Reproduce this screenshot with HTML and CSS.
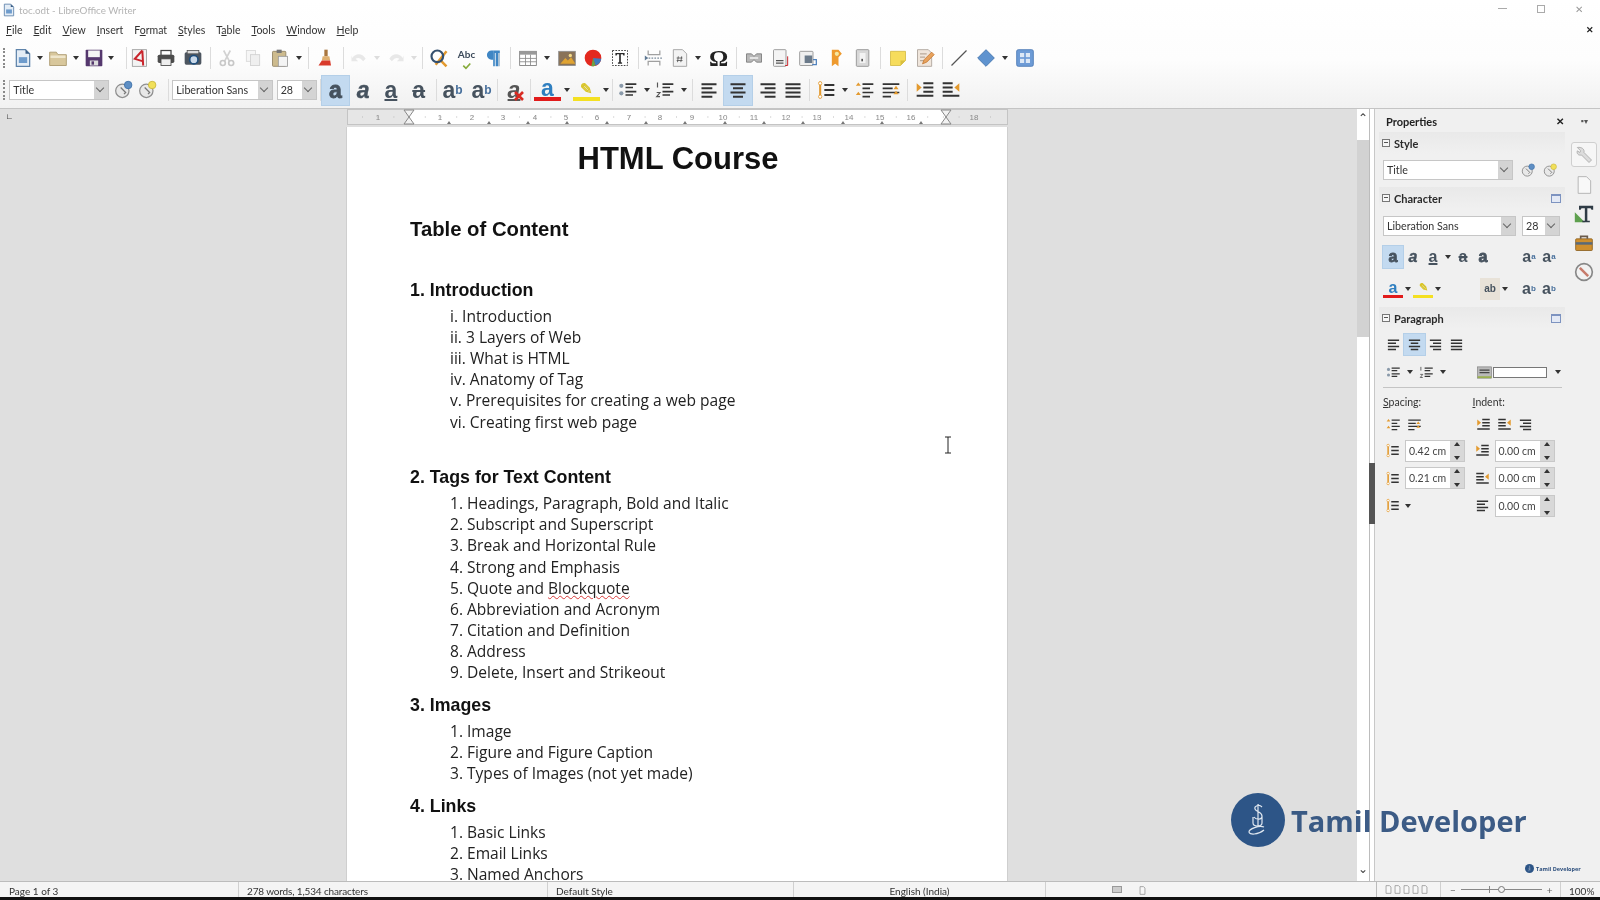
FILE: index.html
```html
<!DOCTYPE html>
<html lang="en">
  <head>
    <meta charset="UTF-8" />
    <meta name="viewport" content="width=device-width, initial-scale=1.0" />
    <title>toc.odt - LibreOffice Writer</title>
    <link rel="stylesheet" href="styles.css">
  </head>

  <body>
    <svg class="defs" width="0" height="0">
      <symbol id="i-doc" viewBox="0 0 24 24"><path d="M4 2h11l5 5v15H4z" fill="#e4edf6" stroke="#5f84ab" stroke-width="1.5"/><rect x="7" y="11" width="10" height="7" fill="#6f9ccc"/><path d="M15 2l5 5h-5z" fill="#3c5f86"/></symbol>
      <symbol id="i-open" viewBox="0 0 24 24"><path d="M2 5h8l2 3h10v13H2z" fill="#d8c79c" stroke="#a69468"/><rect x="3" y="9" width="18" height="3" fill="#efe6cc"/></symbol>
      <symbol id="i-save" viewBox="0 0 24 24"><rect x="2" y="2" width="20" height="20" rx="1" fill="#55386e"/><rect x="5" y="3" width="14" height="8" fill="#f4f4f4"/><rect x="7" y="15" width="10" height="6" fill="#ddd"/><rect x="9" y="16" width="3" height="4" fill="#55386e"/></symbol>
      <symbol id="i-pdf" viewBox="0 0 24 24"><rect x="4" y="2" width="17" height="20" fill="#f3f3f3" stroke="#9a9a9a"/><path d="M16 3L7 13l10 3M16 3l1 18" fill="none" stroke="#c9252c" stroke-width="2.4"/></symbol>
      <symbol id="i-print" viewBox="0 0 24 24"><rect x="6" y="3" width="12" height="6" fill="#fff" stroke="#444" stroke-width="1.5"/><rect x="2" y="8" width="20" height="10" rx="2" fill="#4d4d4d"/><rect x="6" y="13" width="12" height="8" fill="#eee" stroke="#444"/></symbol>
      <symbol id="i-preview" viewBox="0 0 24 24"><rect x="2" y="5" width="20" height="15" rx="2" fill="#4d5660"/><rect x="5" y="3" width="14" height="4" fill="#ddd" stroke="#555"/><circle cx="13" cy="14" r="5" fill="#c9d8e8" stroke="#1f4e7c" stroke-width="2"/></symbol>
      <symbol id="i-cut" viewBox="0 0 24 24"><path d="M8 3l7 13M16 3L9 16" stroke="#d2d2d2" stroke-width="2" fill="none"/><circle cx="7" cy="18" r="3" fill="none" stroke="#c8c8c8" stroke-width="2"/><circle cx="17" cy="18" r="3" fill="none" stroke="#c8c8c8" stroke-width="2"/></symbol>
      <symbol id="i-copy" viewBox="0 0 24 24"><rect x="4" y="3" width="11" height="13" fill="#f6f6f6" stroke="#d8d8d8"/><rect x="9" y="8" width="11" height="13" fill="#efefef" stroke="#d0d0d0"/></symbol>
      <symbol id="i-paste" viewBox="0 0 24 24"><rect x="3" y="4" width="16" height="18" rx="1" fill="#cdbb8e" stroke="#8f8162"/><rect x="8" y="2" width="6" height="4" fill="#777"/><rect x="10" y="10" width="11" height="12" fill="#f4f4f4" stroke="#999"/></symbol>
      <symbol id="i-brush" viewBox="0 0 24 24"><rect x="10" y="2" width="4" height="8" fill="#a9763f"/><path d="M8 10h8l1 5H7z" fill="#e0b070"/><path d="M7 15h10l1 6H3z" fill="#d93a2b"/></symbol>
      <symbol id="i-undo" viewBox="0 0 24 24"><path d="M4 12c4-6 12-6 16 1l-3 3c-3-4-6-5-9-3l3 3H3V9z" fill="#e8e8e8"/></symbol>
      <symbol id="i-redo" viewBox="0 0 24 24"><path d="M20 12c-4-6-12-6-16 1l3 3c3-4 6-5 9-3l-3 3h8V9z" fill="#e8e8e8"/></symbol>
      <symbol id="i-find" viewBox="0 0 24 24"><path d="M13 14l8 8M21 4L8 20" stroke="#e39a2f" stroke-width="3"/><circle cx="10" cy="10" r="7" fill="none" stroke="#34506f" stroke-width="2.6"/></symbol>
      <symbol id="i-check" viewBox="0 0 24 24"><path d="M6 16l5 5 8-9" fill="none" stroke="#86ab3a" stroke-width="3"/></symbol>
      <symbol id="i-pilcrow" viewBox="0 0 24 24"><path d="M11 3H9a5.500 5.500 0 0 0 0 11h2z" fill="#3f86c4"/><path d="M11 3h8v3h-2v16h-3V6h-1v16h-2z" fill="#3f86c4"/><path d="M17 6h2v16h-2z" fill="#9db8cf"/></symbol>
      <symbol id="i-table" viewBox="0 0 24 24"><rect x="2" y="4" width="20" height="17" fill="#fff" stroke="#777"/><rect x="2" y="4" width="20" height="4" fill="#999"/><path d="M2 12.500h20M2 16.500h20M9 8v13M15 8v13" stroke="#888"/></symbol>
      <symbol id="i-image" viewBox="0 0 24 24"><rect x="2" y="4" width="20" height="17" fill="#8a7358" stroke="#8f8f8f"/><path d="M4 19l6-7 3 3 4-4 5 8z" fill="#e0a432"/><circle cx="16" cy="9" r="2" fill="#f4dc8a"/></symbol>
      <symbol id="i-chart" viewBox="0 0 24 24"><circle cx="12" cy="12" r="10" fill="#e3291f"/><path d="M12 12l10 1a10 10 0 0 1-7 8z" fill="#3f7cc0"/><path d="M12 12l3 9a10 10 0 0 1-5 1z" fill="#6aa344"/></symbol>
      <symbol id="i-textbox" viewBox="0 0 24 24"><rect x="3" y="3" width="18" height="18" fill="#fff" stroke="#222" stroke-dasharray="2 1.500"/><path d="M6.500 6h11v3h-1.500l-.5-1.500h-2.500V17l1.500.5V19h-5v-1.500L11 17V7.500H8.500L8 9H6.500z" fill="#2b2b2b"/></symbol>
      <symbol id="i-break" viewBox="0 0 24 24"><path d="M5 3v5h14V3M5 21v-5h14v5" fill="none" stroke="#a0a0a0" stroke-width="1.500"/><path d="M2 12h20" stroke="#7a8a9a" stroke-dasharray="2 1.500" stroke-width="1.500"/><path d="M1 9l4 3-4 3z" fill="#607a94"/></symbol>
      <symbol id="i-field" viewBox="0 0 24 24"><path d="M4 2h11l5 5v15H4z" fill="#f3f3f3" stroke="#999"/><path d="M10 10l-1 7M14 10l-1 7M8 12h7M8 15h7" stroke="#555"/></symbol>
      <symbol id="i-link" viewBox="0 0 24 24"><path d="M3 7h6l3 3 3-3h6v10h-6l-3-3-3 3H3z" fill="#b8b8b8" stroke="#777"/><rect x="7" y="11" width="10" height="2" fill="#eee"/></symbol>
      <symbol id="i-foot" viewBox="0 0 24 24"><rect x="3" y="2" width="15" height="20" rx="1" fill="#f4f4f4" stroke="#8d8d8d"/><path d="M6 15h9M6 18h9" stroke="#555" stroke-width="1.500"/><path d="M20 10v11h-3" fill="none" stroke="#c9252c" stroke-width="1.200"/></symbol>
      <symbol id="i-end" viewBox="0 0 24 24"><rect x="2" y="4" width="16" height="17" rx="1" fill="#efefef" stroke="#8d8d8d"/><rect x="8" y="9" width="9" height="9" fill="#6b7a8a"/><path d="M18 14h4v6h-5" fill="none" stroke="#4f81bd" stroke-width="1.500"/></symbol>
      <symbol id="i-mark" viewBox="0 0 24 24"><path d="M7 2h8l4 5-4 4v11l-4-3-4 3z" fill="#ee9a2e"/><circle cx="13" cy="7" r="2.500" fill="#f5e7a0"/></symbol>
      <symbol id="i-xref" viewBox="0 0 24 24"><rect x="4" y="2" width="15" height="20" rx="1" fill="#d8d8d8" stroke="#8d8d8d"/><rect x="8" y="6" width="7" height="12" fill="#f3f3f3"/><rect x="10" y="13" width="2" height="3" fill="#555"/></symbol>
      <symbol id="i-note" viewBox="0 0 24 24"><path d="M3 4h18v11l-6 6H3z" fill="#f6dc5c" stroke="#d4bb45"/><path d="M15 21v-6h6z" fill="#d9bf3f"/></symbol>
      <symbol id="i-track" viewBox="0 0 24 24"><path d="M3 2h13l4 4v16H3z" fill="#f0e6dc" stroke="#a89f96"/><path d="M6 7h8M6 11h6M6 15h5" stroke="#b9a999" stroke-width="1.500"/><path d="M9 19l2-5 9-9 3 3-9 9z" fill="#e8a25c" stroke="#c57a35"/></symbol>
      <symbol id="i-line" viewBox="0 0 24 24"><path d="M3 21L21 3" stroke="#555" stroke-width="1.500"/></symbol>
      <symbol id="i-shape" viewBox="0 0 24 24"><path d="M12 2l10 10-10 10L2 12z" fill="#5f93cf" stroke="#3c6fa8"/></symbol>
      <symbol id="i-points" viewBox="0 0 24 24"><rect x="2" y="2" width="20" height="20" rx="2" fill="#6d9bd6" stroke="#4a78b4"/><rect x="6" y="6" width="5" height="5" fill="#dce8f6"/><rect x="13" y="6" width="5" height="5" fill="#dce8f6"/><rect x="6" y="13" width="5" height="5" fill="#dce8f6"/><rect x="13" y="13" width="5" height="5" fill="#dce8f6"/></symbol>
      <symbol id="a-left" viewBox="0 0 24 24"><path d="M3 5h18M3 10h13M3 15h18M3 20h13" stroke="#333" stroke-width="2.400"/></symbol>
      <symbol id="a-center" viewBox="0 0 24 24"><path d="M3 5h18M6 10h12M3 15h18M6 20h12" stroke="#333" stroke-width="2.400"/></symbol>
      <symbol id="a-right" viewBox="0 0 24 24"><path d="M3 5h18M8 10h13M3 15h18M8 20h13" stroke="#333" stroke-width="2.400"/></symbol>
      <symbol id="a-just" viewBox="0 0 24 24"><path d="M3 5h18M3 10h18M3 15h18M3 20h18" stroke="#333" stroke-width="2.400"/></symbol>
      <symbol id="l-bullet" viewBox="0 0 24 24"><circle cx="4" cy="7" r="2.500" fill="#8a9aaa"/><circle cx="4" cy="16" r="2.500" fill="#8a9aaa"/><path d="M9 5h13M9 9h9M9 14h13M9 18h9" stroke="#333" stroke-width="2"/></symbol>
      <symbol id="l-number" viewBox="0 0 24 24"><path d="M3 3v6M2 15h4l-4 5h4" stroke="#555" stroke-width="1.400" fill="none"/><path d="M9 5h13M9 9h9M9 14h13M9 18h9" stroke="#333" stroke-width="2"/></symbol>
      <symbol id="s-line" viewBox="0 0 24 24"><path d="M5 2v20" stroke="#e39a2f" stroke-width="2.500"/><circle cx="5" cy="4" r="2" fill="#fff" stroke="#e39a2f"/><circle cx="5" cy="20" r="2" fill="#fff" stroke="#e39a2f"/><path d="M10 6h12M10 12h12M10 18h12" stroke="#333" stroke-width="2.400"/></symbol>
      <symbol id="s-up" viewBox="0 0 24 24"><path d="M9 5h13M9 10h9M9 15h13M9 20h9" stroke="#333" stroke-width="2"/><path d="M4 3l3 4H1zM4 14l3 4H1z" fill="#e39a2f"/></symbol>
      <symbol id="s-down" viewBox="0 0 24 24"><path d="M2 5h20M2 10h12M2 15h20M2 20h10" stroke="#333" stroke-width="2"/><path d="M18 7l3 4h-6zM18 13l3 4h-6z" fill="#e39a2f"/></symbol>
      <symbol id="n-more" viewBox="0 0 24 24"><path d="M10 4h12M10 9h12M10 14h12M2 19h20" stroke="#333" stroke-width="2.400"/><path d="M2 4l6 5-6 5z" fill="#e39a2f"/></symbol>
      <symbol id="n-less" viewBox="0 0 24 24"><path d="M2 4h12M2 9h12M2 14h12M2 19h20" stroke="#333" stroke-width="2.400"/><path d="M22 4l-6 5 6 5z" fill="#e39a2f"/></symbol>
      <symbol id="i-wrench" viewBox="0 0 24 24"><path d="M4 3l4 4-1 2-3-2c-1 3 1 6 5 5l9 9 3-3-9-9c1-4-3-7-8-6z" fill="#dcdcdc" stroke="#a8a8a8"/></symbol>
      <symbol id="i-page" viewBox="0 0 24 24"><path d="M5 2h10l5 5v15H5z" fill="#f8f8f8" stroke="#aaa"/></symbol>
      <symbol id="i-styles" viewBox="0 0 24 24"><path d="M1 22V10l12 12z" fill="#5ea04e"/><path d="M6 2h17v5h-2l-1-2h-4v15h3v2h-9v-2h3V5H9L8 7H6z" fill="#2f3b45"/></symbol>
      <symbol id="i-case" viewBox="0 0 24 24"><rect x="2" y="7" width="20" height="14" rx="1" fill="#cf8f2e" stroke="#8a5f1f"/><path d="M8 7V4h8v3" fill="none" stroke="#6a5a4a" stroke-width="2"/><rect x="2" y="11" width="20" height="3" fill="#5a6a7a"/></symbol>
      <symbol id="i-compass" viewBox="0 0 24 24"><circle cx="12" cy="12" r="10" fill="#f2f2f2" stroke="#888" stroke-width="2"/><path d="M7 7l10 10" stroke="#c77b6b" stroke-width="3"/></symbol>
      <symbol id="i-plain" viewBox="0 0 24 24"><circle cx="10" cy="13" r="8" fill="#e8e8e8" stroke="#8f8f8f" stroke-width="1.500"/><path d="M8 9l6 6-2 2" fill="none" stroke="#777" stroke-width="1.500"/><circle cx="17" cy="6" r="4.500" fill="#5f8fc4" stroke="#3c6fa8"/></symbol>
      <symbol id="i-newstyle" viewBox="0 0 24 24"><circle cx="10" cy="13" r="8" fill="#e8e8e8" stroke="#8f8f8f" stroke-width="1.500"/><path d="M8 9l6 6-2 2" fill="none" stroke="#777" stroke-width="1.500"/><circle cx="17" cy="6" r="4.500" fill="#f1e05a" stroke="#c8b53a"/></symbol>
      <symbol id="i-area" viewBox="0 0 24 24"><rect x="1" y="3" width="22" height="18" fill="#b9b9b9" stroke="#777"/><path d="M4 8h16M4 12h16" stroke="#444" stroke-width="2"/><rect x="1" y="18" width="22" height="3" fill="#9ab04f"/></symbol>
      <symbol id="i-x" viewBox="0 0 10 10"><path d="M1 1l8 8M9 1L1 9" stroke="#d92b22" stroke-width="2.600"/></symbol>
      <symbol id="i-sheet" viewBox="0 0 10 12"><path d="M1.500.5h5l2 2v9h-7z" fill="#f8f8f8" stroke="#888"/></symbol>
      <symbol id="i-cursor" viewBox="0 0 10 18"><path d="M2 1h6M5 1v16M2 17h6" stroke="#222" fill="none"/></symbol>
      <symbol id="i-logo" viewBox="0 0 54 54"><circle cx="27" cy="27" r="27" fill="#2d5587"/><path d="M31 14c-3-3-8-1-7 2s7 3 7 7-6 4-8 1M27 11v23M22 24v6c0 4 9 4 9 0v-7M33 34c-5-2-15 2-15 5s9 3 15-2" fill="none" stroke="#dfe7f0" stroke-width="1.200"/></symbol>
    </svg>

    <div class="app">
      <div class="titlebar">
        <svg class="title-icon"><use href="#i-doc"/></svg>
        <span class="title-text">toc.odt - LibreOffice Writer</span>
        <div class="window-btns">
          <span class="win-min"></span>
          <span class="win-max"></span>
          <span class="win-close">✕</span>
        </div>
      </div>

      <div class="menubar">
        <nav class="menus">
          <span><u>F</u>ile</span>
          <span><u>E</u>dit</span>
          <span><u>V</u>iew</span>
          <span><u>I</u>nsert</span>
          <span>F<u>o</u>rmat</span>
          <span><u>S</u>tyles</span>
          <span>T<u>a</u>ble</span>
          <span><u>T</u>ools</span>
          <span><u>W</u>indow</span>
          <span><u>H</u>elp</span>
        </nav>
        <span class="doc-close">✕</span>
      </div>

      <div class="toolbar">
        <i class="grip"></i>
        <div class="group w118">
          <svg class="ico"><use href="#i-doc"/></svg><b class="drop"></b>
          <svg class="ico"><use href="#i-open"/></svg><b class="drop"></b>
          <svg class="ico"><use href="#i-save"/></svg><b class="drop"></b>
        </div>
        <i class="sep"></i>
        <div class="group w83 print-group">
          <svg class="ico"><use href="#i-pdf"/></svg>
          <svg class="ico"><use href="#i-print"/></svg>
          <svg class="ico"><use href="#i-preview"/></svg>
        </div>
        <i class="sep"></i>
        <div class="group w97">
          <svg class="ico"><use href="#i-cut"/></svg>
          <svg class="ico"><use href="#i-copy"/></svg>
          <svg class="ico"><use href="#i-paste"/></svg><b class="drop"></b>
        </div>
        <i class="sep"></i>
        <div class="group w34">
          <svg class="ico"><use href="#i-brush"/></svg>
        </div>
        <i class="sep"></i>
        <div class="group w78">
          <svg class="ico"><use href="#i-undo"/></svg><b class="drop faint"></b>
          <svg class="ico"><use href="#i-redo"/></svg><b class="drop faint"></b>
        </div>
        <i class="sep"></i>
        <div class="group w87">
          <svg class="ico"><use href="#i-find"/></svg>
          <span class="spell">Abc<svg class="spell-check"><use href="#i-check"/></svg></span>
          <svg class="ico"><use href="#i-pilcrow"/></svg>
        </div>
        <i class="sep"></i>
        <div class="group w127 insert-group">
          <svg class="ico"><use href="#i-table"/></svg><b class="drop"></b>
          <svg class="ico"><use href="#i-image"/></svg>
          <svg class="ico"><use href="#i-chart"/></svg>
          <svg class="ico"><use href="#i-textbox"/></svg>
        </div>
        <i class="sep"></i>
        <div class="group w97">
          <svg class="ico"><use href="#i-break"/></svg>
          <svg class="ico"><use href="#i-field"/></svg><b class="drop"></b>
          <span class="omega">Ω</span>
        </div>
        <i class="sep"></i>
        <div class="group w143">
          <svg class="ico"><use href="#i-link"/></svg>
          <svg class="ico"><use href="#i-foot"/></svg>
          <svg class="ico"><use href="#i-end"/></svg>
          <svg class="ico"><use href="#i-mark"/></svg>
          <svg class="ico"><use href="#i-xref"/></svg>
        </div>
        <i class="sep"></i>
        <div class="group w61">
          <svg class="ico"><use href="#i-note"/></svg>
          <svg class="ico"><use href="#i-track"/></svg>
        </div>
        <i class="sep"></i>
        <div class="group w98">
          <svg class="ico"><use href="#i-line"/></svg>
          <svg class="ico"><use href="#i-shape"/></svg><b class="drop"></b>
          <svg class="ico"><use href="#i-points"/></svg>
        </div>
      </div>

      <div class="toolbar">
        <i class="grip"></i>
        <div class="group style-group">
          <div class="combo style-combo"><span>Title</span><b class="combo-btn"></b></div>
          <svg class="ico"><use href="#i-plain"/></svg>
          <svg class="ico"><use href="#i-newstyle"/></svg>
        </div>
        <i class="sep"></i>
        <div class="group w151">
          <div class="combo font-combo"><span>Liberation Sans</span><b class="combo-btn"></b></div>
          <div class="combo size-combo"><span>28</span><b class="combo-btn"></b></div>
        </div>
        <i class="sep"></i>
        <div class="group w115 format-group">
          <span class="glyph on g-bold">a</span>
          <span class="glyph g-italic">a</span>
          <span class="glyph g-under">a</span>
          <span class="glyph g-strike">a</span>
        </div>
        <i class="sep"></i>
        <div class="group w60">
          <span class="glyph">a<sup>b</sup></span>
          <span class="glyph">a<sub>b</sub></span>
        </div>
        <i class="sep"></i>
        <div class="group w32">
          <span class="glyph g-clear">a<svg class="clear-x"><use href="#i-x"/></svg></span>
        </div>
        <i class="sep"></i>
        <div class="group w81">
          <span class="glyph g-color">a</span><b class="drop"></b>
          <span class="glyph g-mark">✎</span><b class="drop"></b>
        </div>
        <i class="sep"></i>
        <div class="group w79">
          <svg class="ico"><use href="#l-bullet"/></svg><b class="drop"></b>
          <svg class="ico"><use href="#l-number"/></svg><b class="drop"></b>
        </div>
        <i class="sep"></i>
        <div class="group w116">
          <svg class="ico"><use href="#a-left"/></svg>
          <span class="on-box"><svg class="ico"><use href="#a-center"/></svg></span>
          <svg class="ico"><use href="#a-right"/></svg>
          <svg class="ico"><use href="#a-just"/></svg>
        </div>
        <i class="sep"></i>
        <div class="group w97">
          <svg class="ico"><use href="#s-line"/></svg><b class="drop"></b>
          <svg class="ico"><use href="#s-up"/></svg>
          <svg class="ico"><use href="#s-down"/></svg>
        </div>
        <i class="sep"></i>
        <div class="group w60">
          <svg class="ico"><use href="#n-more"/></svg>
          <svg class="ico"><use href="#n-less"/></svg>
        </div>
      </div>

      <div class="main">
        <div class="workspace">
          <span class="tab-mark">∟</span>
          <svg class="ruler" width="661" height="16" viewBox="0 0 661 16">
            <rect width="661" height="16" fill="#e6e6e6"/>
            <rect x="62" y="1" width="537" height="14" fill="#fff"/>
            <rect x=".5" y=".5" width="660" height="15" fill="none" stroke="#c4c4c4"/>
            <path d="M15 8H650" stroke="#bbb" stroke-dasharray="1 14.700"/>
            <g class="ruler-nums" text-anchor="middle">
              <text x="31" y="11">1</text><text x="93" y="11">1</text><text x="125" y="11">2</text><text x="156" y="11">3</text><text x="188" y="11">4</text><text x="219" y="11">5</text><text x="250" y="11">6</text><text x="282" y="11">7</text><text x="313" y="11">8</text><text x="345" y="11">9</text><text x="376" y="11">10</text><text x="407" y="11">11</text><text x="439" y="11">12</text><text x="470" y="11">13</text><text x="502" y="11">14</text><text x="533" y="11">15</text><text x="564" y="11">16</text><text x="627" y="11">18</text>
            </g>
            <path d="M100 15l2-3 2 3zM140 15l2-3 2 3zM179 15l2-3 2 3zM218 15l2-3 2 3zM258 15l2-3 2 3zM297 15l2-3 2 3zM336 15l2-3 2 3zM376 15l2-3 2 3zM415 15l2-3 2 3zM454 15l2-3 2 3zM494 15l2-3 2 3zM533 15l2-3 2 3zM572 15l2-3 2 3z" fill="#777"/>
            <path d="M57 1h10l-5 7 5 7H57l5-7zM594 1h10l-5 7 5 7h-10l5-7z" fill="#f2f2f2" stroke="#888"/>
          </svg>
          <div class="page">
            <h1 class="doc-title">HTML Course</h1>
            <h2 class="doc-sub">Table of Content</h2>

            <h3 class="doc-head first">1. Introduction</h3>
            <ul class="doc-list">
              <li>i. Introduction</li>
              <li>ii. 3 Layers of Web</li>
              <li>iii. What is HTML</li>
              <li>iv. Anatomy of Tag</li>
              <li>v. Prerequisites for creating a web page</li>
              <li>vi. Creating first web page</li>
            </ul>

            <h3 class="doc-head far">2. Tags for Text Content</h3>
            <ul class="doc-list">
              <li>1. Headings, Paragraph, Bold and Italic</li>
              <li>2. Subscript and Superscript</li>
              <li>3. Break and Horizontal Rule</li>
              <li>4. Strong and Emphasis</li>
              <li>5. Quote and <span class="typo">Blockquote</span></li>
              <li>6. Abbreviation and Acronym</li>
              <li>7. Citation and Definition</li>
              <li>8. Address</li>
              <li>9. Delete, Insert and Strikeout</li>
            </ul>

            <h3 class="doc-head">3. Images</h3>
            <ul class="doc-list">
              <li>1. Image</li>
              <li>2. Figure and Figure Caption</li>
              <li>3. Types of Images (not yet made)</li>
            </ul>

            <h3 class="doc-head">4. Links</h3>
            <ul class="doc-list">
              <li>1. Basic Links</li>
              <li>2. Email Links</li>
              <li>3. Named Anchors</li>
            </ul>
          </div>
        </div>

        <div class="vscroll">
          <span class="arrow">⌃</span>
          <div class="thumb"></div>
          <span class="arrow down">⌄</span>
        </div>

        <aside class="sidebar">
          <div class="deck">
            <div class="deck-title"><span>Properties</span><span class="deck-close">✕</span></div>

            <section class="panel">
              <div class="panel-head"><i class="minus"></i>Style</div>
              <div class="panel-row row-style">
                <div class="combo side-style"><span>Title</span><b class="combo-btn"></b></div>
                <svg class="ico-s"><use href="#i-plain"/></svg>
                <svg class="ico-s"><use href="#i-newstyle"/></svg>
              </div>
            </section>

            <section class="panel">
              <div class="panel-head"><i class="minus"></i>Character<i class="more"></i></div>
              <div class="panel-row row-font">
                <div class="combo side-font"><span>Liberation Sans</span><b class="combo-btn"></b></div>
                <div class="combo side-size"><span>28</span><b class="combo-btn"></b></div>
              </div>
              <div class="panel-row row-glyphs">
                <span class="glyph small on g-bold">a</span>
                <span class="glyph small g-italic">a</span>
                <span class="glyph small g-under">a</span><b class="drop"></b>
                <span class="glyph small g-strike">a</span>
                <span class="glyph small g-bold">a</span>
                <span class="push"></span>
                <span class="glyph small">a<sup>a</sup></span>
                <span class="glyph small">a<sup>a</sup></span>
              </div>
              <div class="panel-row row-glyphs last">
                <span class="glyph small g-color">a</span><b class="drop"></b>
                <span class="glyph small g-mark">✎</span><b class="drop"></b>
                <span class="push"></span>
                <span class="glyph small g-spacing">ab</span><b class="drop wide"></b>
                <span class="glyph small">a<sup>b</sup></span>
                <span class="glyph small">a<sub>b</sub></span>
              </div>
            </section>

            <section class="panel">
              <div class="panel-head"><i class="minus"></i>Paragraph<i class="more"></i></div>
              <div class="panel-row row-align">
                <span class="cell"><svg class="ico-s"><use href="#a-left"/></svg></span>
                <span class="cell on-cell"><svg class="ico-s"><use href="#a-center"/></svg></span>
                <span class="cell"><svg class="ico-s"><use href="#a-right"/></svg></span>
                <span class="cell"><svg class="ico-s"><use href="#a-just"/></svg></span>
              </div>
              <div class="panel-row row-lists">
                <span class="cell"><svg class="ico-s"><use href="#l-bullet"/></svg></span><b class="drop"></b>
                <span class="cell"><svg class="ico-s"><use href="#l-number"/></svg></span><b class="drop"></b>
                <span class="push"></span>
                <svg class="ico-s area"><use href="#i-area"/></svg>
                <span class="area-box"></span><b class="drop"></b>
              </div>
              <div class="spacing-grid">
                <div class="col">
                  <label><u>S</u>pacing:</label>
                  <div class="icon-row">
                    <span class="cell"><svg class="ico-s"><use href="#s-up"/></svg></span>
                    <span class="cell"><svg class="ico-s"><use href="#s-down"/></svg></span>
                  </div>
                  <div class="field-row">
                    <svg class="ico-s"><use href="#s-line"/></svg>
                    <div class="spin"><span>0.42 cm</span><b class="spin-btn"></b></div>
                  </div>
                  <div class="field-row">
                    <svg class="ico-s"><use href="#s-line"/></svg>
                    <div class="spin"><span>0.21 cm</span><b class="spin-btn"></b></div>
                  </div>
                  <div class="field-row">
                    <svg class="ico-s"><use href="#s-line"/></svg><b class="drop"></b>
                  </div>
                </div>
                <div class="col">
                  <label><u>I</u>ndent:</label>
                  <div class="icon-row">
                    <span class="cell"><svg class="ico-s"><use href="#n-more"/></svg></span>
                    <span class="cell"><svg class="ico-s"><use href="#n-less"/></svg></span>
                    <span class="cell"><svg class="ico-s"><use href="#a-right"/></svg></span>
                  </div>
                  <div class="field-row">
                    <svg class="ico-s"><use href="#n-more"/></svg>
                    <div class="spin"><span>0.00 cm</span><b class="spin-btn"></b></div>
                  </div>
                  <div class="field-row">
                    <svg class="ico-s"><use href="#n-less"/></svg>
                    <div class="spin"><span>0.00 cm</span><b class="spin-btn"></b></div>
                  </div>
                  <div class="field-row">
                    <svg class="ico-s"><use href="#a-left"/></svg>
                    <div class="spin"><span>0.00 cm</span><b class="spin-btn"></b></div>
                  </div>
                </div>
              </div>
            </section>
          </div>

          <div class="tabbar">
            <span class="tab-menu">▪▾</span>
            <span class="tab active"><svg class="ico-t"><use href="#i-wrench"/></svg></span>
            <span class="tab"><svg class="ico-t"><use href="#i-page"/></svg></span>
            <span class="tab"><svg class="ico-t"><use href="#i-styles"/></svg></span>
            <span class="tab"><svg class="ico-t"><use href="#i-case"/></svg></span>
            <span class="tab"><svg class="ico-t"><use href="#i-compass"/></svg></span>
          </div>
        </aside>
      </div>

      <div class="statusbar">
        <span class="st st-page">Page 1 of 3</span>
        <span class="st st-words">278 words, 1,534 characters</span>
        <span class="st st-style">Default Style</span>
        <span class="st st-lang">English (India)</span>
        <span class="st st-flags"><i class="flag"></i></span>
        <span class="st st-sign"><svg class="sheet"><use href="#i-sheet"/></svg></span>
        <span class="st st-views">
          <svg class="sheet"><use href="#i-sheet"/></svg>
          <svg class="sheet"><use href="#i-sheet"/></svg><svg class="sheet"><use href="#i-sheet"/></svg>
          <svg class="sheet"><use href="#i-sheet"/></svg><svg class="sheet"><use href="#i-sheet"/></svg>
        </span>
        <span class="st st-zoom"><span>−</span><span class="slider"><i class="knob"></i></span><span>+</span></span>
        <span class="st st-pct">100%</span>
      </div>
      <div class="blackline"></div>

      <!-- video watermark, sits over the window -->
      <div class="watermark">
        <svg class="wm-logo"><use href="#i-logo"/></svg>
        <span class="wm-text">Tamil Developer</span>
      </div>
      <div class="watermark-small">
        <svg class="wm-logo-small"><use href="#i-logo"/></svg>
        <span>Tamil Developer</span>
      </div>
      <i class="collapse"></i>
      <svg class="ibeam"><use href="#i-cursor"/></svg>
    </div>
  </body>
</html>
```

FILE: styles.css
```css
* {
  box-sizing: border-box;
}

body {
  margin: 0;
  overflow: hidden;
  font-family: Lato, "Open Sans", sans-serif;
  background-color: #fff;
}

.defs {
  position: absolute;
}

.app {
  position: relative;
  width: 1600px;
  height: 900px;
  display: flex;
  flex-direction: column;
  overflow: hidden;
  filter: blur(0.35px);
  background: linear-gradient(#ffffff 0, #fdfdfd 60px, #f1f1f1 108px);
}

/* title + menu */
.titlebar {
  height: 19px;
  display: flex;
  align-items: center;
  padding-left: 2px;
}

.title-icon {
  width: 14px;
  height: 16px;
}

.title-text {
  margin-left: 3px;
  font-size: 9.8px;
  color: #b4b4b4;
}

.window-btns {
  margin-left: auto;
  display: flex;
  align-items: center;
  height: 16px;
  margin-top: -2px;
}

.win-min {
  width: 9px;
  height: 1px;
  background-color: #aaa;
  margin-right: 30px;
}

.win-max {
  width: 8px;
  height: 8px;
  border: 1px solid #aaa;
  margin-right: 30px;
}

.win-close {
  font-size: 10px;
  color: #999;
  width: 25px;
}

.menubar {
  height: 21px;
  margin-bottom: 2px;
  display: flex;
  align-items: center;
  padding: 0 6px;
  font-size: 10.5px;
  color: #333;
}

.menus {
  display: flex;
  gap: 11px;
}

.doc-close {
  margin-left: auto;
  font-size: 9px;
  font-weight: bold;
  color: #222;
}

/* toolbars */
.toolbar {
  height: 32px;
  display: flex;
  align-items: center;
  flex-shrink: 0;
}

.grip {
  width: 2px;
  height: 20px;
  margin: 0 3px 0 3px;
  border-left: 2px dotted #8a8a8a;
}

.group {
  display: flex;
  align-items: center;
  justify-content: space-evenly;
  height: 100%;
  flex-shrink: 0;
}

.w32 { width: 32px; }
.w34 { width: 34px; }
.w60 { width: 60px; }
.w61 { width: 61px; }
.w78 { width: 78px; }
.w79 { width: 79px; }
.w81 { width: 81px; }
.w83 { width: 83px; }
.w87 { width: 87px; }
.w97 { width: 97px; }
.w98 { width: 98px; }
.w115 { width: 115px; }
.w116 { width: 116px; }
.w127 { width: 127px; }
.w143 { width: 143px; }
.w151 { width: 151px; }

.w118 {
  width: 118px;
  padding-right: 7px;
}

.print-group {
  justify-content: space-between;
  padding: 0 7px 0 2px;
}

.insert-group {
  padding-right: 2px;
}

.format-group {
  padding-right: 3px;
}

.style-group {
  width: 163px;
  margin-left: -3px;
  padding-right: 6px;
}

.sep {
  width: 1px;
  height: 22px;
  background-color: #dcdcdc;
  flex-shrink: 0;
}

.ico {
  width: 20px;
  height: 20px;
  flex-shrink: 0;
}

.drop {
  width: 0;
  height: 0;
  border: 3px solid transparent;
  border-top: 4px solid #333;
  border-bottom: 0;
  flex-shrink: 0;
}

.drop.faint {
  border-top-color: #ddd;
}

.spell {
  position: relative;
  width: 24px;
  font-size: 10px;
  font-weight: bold;
  color: #3c4a5a;
  text-align: center;
  margin-top: -8px;
}

.spell-check {
  position: absolute;
  left: 4px;
  top: 9px;
  width: 15px;
  height: 13px;
}

.omega {
  width: 24px;
  font: bold 24px "Liberation Serif", serif;
  color: #222;
  text-align: center;
}

.combo {
  display: flex;
  align-items: stretch;
  height: 20px;
  background-color: #fff;
  border: 1px solid #c6c6c6;
  font-size: 10.7px;
  color: #333;
  flex-shrink: 0;
}

.combo span {
  flex: 1;
  padding-left: 3px;
  line-height: 18px;
  white-space: nowrap;
  overflow: hidden;
}

.combo-btn {
  position: relative;
  width: 14px;
  background-color: #d4d4d4;
}

.combo-btn::after {
  content: "";
  position: absolute;
  left: 3px;
  top: 4px;
  width: 5px;
  height: 5px;
  border-right: 1px solid #666;
  border-bottom: 1px solid #666;
  transform: rotate(45deg);
}

.style-combo {
  width: 100px;
}

.font-combo {
  width: 101px;
}

.size-combo {
  width: 40px;
}

.glyph {
  position: relative;
  width: 27px;
  height: 29px;
  display: flex;
  align-items: center;
  justify-content: center;
  font: bold 23px/1 "Liberation Sans", sans-serif;
  color: #46525e;
  flex-shrink: 0;
}

.glyph.on,
.on-box,
.on-cell {
  background-color: #c3daf0;
  outline: 1px solid #b4cfe8;
}

.glyph sup,
.glyph sub {
  font-size: 12px;
  color: #48709c;
  line-height: 0;
}

.g-bold {
  -webkit-text-stroke: 0.8px #46525e;
}

.g-italic {
  font-style: italic;
  -webkit-text-stroke: 0.4px #46525e;
}

.g-under,
.g-clear {
  text-decoration: underline;
  text-decoration-thickness: 2px;
}

.g-strike {
  text-decoration: line-through;
  text-decoration-thickness: 2px;
}

.g-clear {
  font-style: italic;
  color: #555;
}

.clear-x {
  position: absolute;
  right: 4px;
  bottom: 4px;
  width: 10px;
  height: 10px;
}

.g-color {
  color: #2f7fc0;
  border-bottom: 4px solid #e11b1b;
  height: 22px;
}

.g-mark {
  color: #d9c52a;
  border-bottom: 4px solid #f4e021;
  height: 22px;
  font-size: 15px;
}

.on-box {
  width: 28px;
  height: 29px;
  display: flex;
  align-items: center;
  justify-content: center;
}

/* main area */
.main {
  flex: 1;
  min-height: 0;
  display: flex;
  margin-top: 2px;
  border-top: 1px solid #c4c4c4;
}

.workspace {
  position: relative;
  width: 1357px;
  background-color: #dfdfdf;
  padding-left: 347px;
  overflow: hidden;
}

.tab-mark {
  position: absolute;
  left: 6px;
  top: 0;
  font-size: 10px;
  color: #555;
}

.ruler {
  display: block;
  margin-bottom: 2px;
}

.ruler-nums {
  font: 8px "Liberation Sans", sans-serif;
  fill: #8a8a8a;
}

.page {
  width: 662px;
  height: 760px;
  margin-left: -1px;
  padding: 1px 61px 0 63px;
  background-color: #fff;
  border-left: 1px solid #cfcfcf;
  border-right: 1px solid #cfcfcf;
  color: #111;
  overflow: hidden;
}

.doc-title,
.doc-sub,
.doc-head {
  font-family: "Liberation Sans", sans-serif;
  font-weight: bold;
  margin: 0;
}

.doc-title {
  font-size: 31px;
  line-height: 36px;
  margin-top: 13px;
  text-align: center;
}

.doc-sub {
  font-size: 20.3px;
  line-height: 26px;
  margin-top: 39px;
}

.doc-head {
  font-size: 17.8px;
  line-height: 22px;
  margin-top: 10.5px;
}

.doc-head.first {
  margin-top: 37px;
}

.doc-head.far {
  margin-top: 33.5px;
}

.doc-list {
  list-style: none;
  margin: 4.8px 0 0;
  padding: 0 0 0 40px;
  font-family: "Open Sans", sans-serif;
  font-size: 15.55px;
  line-height: 21.15px;
  color: #222;
}

.typo {
  text-decoration: underline wavy #d83a3a 1px;
}

/* scrollbar */
.vscroll {
  width: 12px;
  display: flex;
  flex-direction: column;
  align-items: center;
  background-color: #fff;
}

.arrow {
  height: 22px;
  font-size: 12px;
  line-height: 18px;
  color: #444;
}

.arrow.down {
  margin-top: auto;
  height: 16px;
  line-height: 8px;
}

.thumb {
  width: 100%;
  height: 197px;
  margin-top: 9px;
  background-color: #d2d2d2;
}

/* sidebar */
.sidebar {
  width: 231px;
  display: flex;
  background-color: #f0f0f0;
  border-left: 1px solid #bcbcbc;
  box-shadow: inset 4px 0 0 #fff, inset 5px 0 0 #c8c8c8;
  padding-left: 9px;
  color: #333;
}

.deck {
  width: 186px;
}

.deck-title {
  height: 23px;
  display: flex;
  align-items: center;
  justify-content: space-between;
  padding: 1px 1px 0 7px;
  font-size: 11px;
  font-weight: bold;
  color: #222;
}

.deck-close {
  font-size: 10px;
}

.panel-head {
  display: flex;
  align-items: center;
  height: 22px;
  padding-left: 3px;
  font-size: 11px;
  font-weight: bold;
  color: #2a2a2a;
  background: linear-gradient(#e9e9e9, #f0f0f0);
}

.minus {
  position: relative;
  width: 8px;
  height: 8px;
  margin-right: 4px;
  border: 1px solid #777;
  background-color: #f6f6f6;
}

.minus::after {
  content: "";
  position: absolute;
  left: 1px;
  top: 2px;
  width: 4px;
  height: 1px;
  background-color: #555;
}

.more {
  width: 10px;
  height: 9px;
  margin-left: auto;
  margin-right: 4px;
  border: 1px solid #7d93c0;
  border-top-width: 2px;
  background-color: #e3e9f5;
}

.panel-row {
  display: flex;
  align-items: center;
  padding: 0 6px 0 4px;
}

.row-style {
  height: 32px;
  gap: 7px;
  margin-bottom: 1px;
}

.side-style {
  width: 130px;
  margin-right: 1px;
}

.row-font {
  height: 28px;
  gap: 6px;
  margin: 3px 0 1px;
}

.side-font {
  width: 133px;
}

.side-size {
  width: 38px;
}

.ico-s {
  width: 15px;
  height: 15px;
  flex-shrink: 0;
}

.glyph.small {
  width: 20px;
  height: 22px;
  font-size: 16px;
}

.glyph.small.g-color,
.glyph.small.g-mark {
  height: 17px;
  border-bottom-width: 3px;
}

.glyph.small.g-mark {
  font-size: 11px;
}

.glyph.small sup,
.glyph.small sub {
  font-size: 8px;
}

.g-spacing {
  font-size: 10px !important;
  background-color: #e8e2d8;
}

.row-glyphs {
  height: 32px;
}

.row-glyphs .drop {
  margin: 0 2px;
}

.row-glyphs .drop.wide {
  margin-right: 11px;
}

.row-glyphs.last {
  margin-bottom: 2px;
}

.push {
  flex: 1;
}

.cell {
  width: 21px;
  height: 21px;
  display: flex;
  align-items: center;
  justify-content: center;
  flex-shrink: 0;
}

.row-align {
  height: 30px;
  margin-bottom: 1px;
}

.row-lists {
  height: 24px;
  margin-bottom: 3px;
  padding-right: 1px;
}

.row-lists .drop {
  margin: 0 3px;
}

.area {
  margin-right: 1px;
}

.area-box {
  width: 54px;
  height: 11px;
  background-color: #fff;
  border: 1px solid #777;
  margin-right: 5px;
}

.spacing-grid {
  display: flex;
  margin: 0 3px 0 4px;
  padding-top: 6px;
  border-top: 1px solid #c4c4c4;
}

.col {
  width: 97px;
  font-size: 10.5px;
}

.col label {
  display: block;
  height: 18px;
  line-height: 16px;
}

.icon-row {
  display: flex;
  height: 25px;
  align-items: center;
}

.field-row {
  display: flex;
  align-items: center;
  height: 27.5px;
  gap: 5px;
  padding-left: 2px;
}

.spin {
  display: flex;
  width: 60px;
  height: 22px;
  background-color: #fff;
  border: 1px solid #c8c8c8;
  line-height: 20px;
}

.spin span {
  flex: 1;
  padding-left: 3px;
  color: #444;
}

.spin-btn {
  position: relative;
  width: 14px;
  background-color: #d8d8d8;
}

.spin-btn::before,
.spin-btn::after {
  content: "";
  position: absolute;
  left: 4px;
  border: 3px solid transparent;
}

.spin-btn::before {
  top: 1px;
  border-bottom: 4px solid #333;
  border-top: 0;
}

.spin-btn::after {
  bottom: 1px;
  border-top: 4px solid #333;
  border-bottom: 0;
}

.tabbar {
  width: 30px;
  margin-left: 4px;
  display: flex;
  flex-direction: column;
  align-items: center;
  padding-top: 3px;
}

.tab-menu {
  height: 30px;
  font-size: 8px;
  color: #555;
  line-height: 18px;
}

.tab {
  width: 26px;
  height: 29px;
  display: flex;
  align-items: center;
  justify-content: center;
}

.tab.active {
  height: 25px;
  margin-bottom: 3px;
  border: 1px solid #cfcfcf;
  border-radius: 3px;
  background-color: #f6f6f6;
}

.ico-t {
  width: 20px;
  height: 20px;
}

/* status bar */
.statusbar {
  height: 16px;
  display: flex;
  align-items: stretch;
  flex-shrink: 0;
  background-color: #f4f4f4;
  border-top: 1px solid #bcbcbc;
  font-size: 10px;
  line-height: 18px;
  color: #333;
}

.st {
  padding-left: 9px;
  border-right: 1px solid #d0d0d0;
  white-space: nowrap;
}

.st-page { width: 239px; }
.st-words { width: 309px; padding-left: 8px; letter-spacing: -0.15px; }
.st-style { width: 246px; padding-left: 8px; }
.st-lang { width: 252px; text-align: center; padding-left: 0; }
.st-flags { width: 84px; padding-left: 66px; border-right: 0; }
.st-sign { width: 247px; padding-left: 9px; border-right: 1px solid #bbb; }
.st-views { width: 64px; padding-left: 8px; display: flex; align-items: center; gap: 1px; }

.flag {
  display: block;
  width: 10px;
  height: 7px;
  margin-top: 4px;
  border: 1px solid #999;
  background-color: #ccc;
}

.sheet {
  display: inline-block;
  width: 7px;
  height: 9px;
  margin-top: 3px;
}

.st-views .sheet {
  margin-top: 0;
  margin-right: 1px;
}

.st-zoom {
  display: flex;
  align-items: center;
  gap: 5px;
  width: 120px;
  color: #666;
}

.slider {
  position: relative;
  width: 81px;
  height: 1px;
  background-color: #888;
}

.slider::before {
  content: "";
  position: absolute;
  left: 28px;
  top: -3px;
  width: 1px;
  height: 7px;
  background-color: #888;
}

.knob {
  position: absolute;
  left: 37px;
  top: -3px;
  width: 7px;
  height: 7px;
  border: 1px solid #777;
  border-radius: 50%;
  background-color: #f4f4f4;
}

.st-pct {
  flex: 1;
  border: 0;
  padding-left: 8px;
}

.blackline {
  height: 3px;
  background-color: #111;
  flex-shrink: 0;
}

/* overlays */
.watermark {
  position: absolute;
  left: 1231px;
  top: 793px;
  display: flex;
  align-items: center;
  gap: 6px;
  color: #2d4f7d;
}

.wm-logo {
  width: 54px;
  height: 54px;
}

.wm-text {
  font-family: "Open Sans", sans-serif;
  font-weight: 700;
  font-size: 29px;
  opacity: 0.92;
}

.watermark-small {
  position: absolute;
  left: 1525px;
  top: 864px;
  display: flex;
  align-items: center;
  gap: 2px;
  font-family: "Open Sans", sans-serif;
  font-size: 5.5px;
  font-weight: bold;
  color: #2d4f7d;
}

.wm-logo-small {
  width: 9px;
  height: 9px;
}

.collapse {
  position: absolute;
  left: 1369px;
  top: 463px;
  width: 6px;
  height: 61px;
  background-color: #555;
}

.ibeam {
  position: absolute;
  left: 943px;
  top: 436px;
  width: 10px;
  height: 18px;
}
```
